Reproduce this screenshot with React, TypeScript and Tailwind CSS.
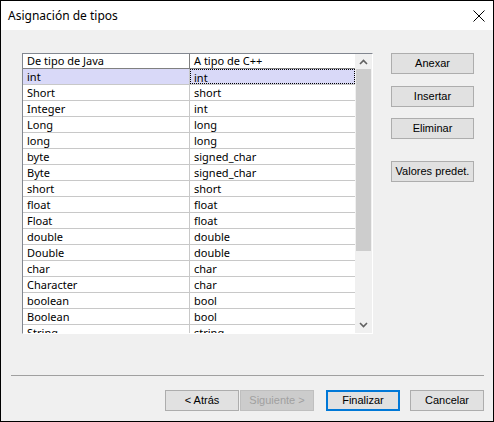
import React from 'react'

const rows: [string, string][] = [
  ['int', 'int'],
  ['Short', 'short'],
  ['Integer', 'int'],
  ['Long', 'long'],
  ['long', 'long'],
  ['byte', 'signed_char'],
  ['Byte', 'signed_char'],
  ['short', 'short'],
  ['float', 'float'],
  ['Float', 'float'],
  ['double', 'double'],
  ['Double', 'double'],
  ['char', 'char'],
  ['Character', 'char'],
  ['boolean', 'bool'],
  ['Boolean', 'bool'],
  ['String', 'string'],
]

const uiFont = { fontFamily: '"Liberation Sans", Arial, sans-serif' }
const gridFont = { fontFamily: '"Noto Sans", "Open Sans", sans-serif' }

function Button({ label, className = '', disabled = false, primary = false }: { label: string; className?: string; disabled?: boolean; primary?: boolean }) {
  return (
    <button
      disabled={disabled}
      style={uiFont}
      className={`h-[21px] w-[74px] text-[11px] leading-none flex items-center justify-center ${
        disabled
          ? 'bg-[#cccccc] border border-[#bfbfbf] text-[#a0a0a0]'
          : primary
            ? 'bg-[#e1e1e1] border-2 border-[#0078d7] text-black'
            : 'bg-[#e1e1e1] border border-[#adadad] text-black'
      } ${className}`}
    >
      {label}
    </button>
  )
}

function TypeTable() {
  return (
    <div className="w-[351px] h-[281px] border border-t-[#828790] border-l-[#828790] border-r-white border-b-white bg-[#f0f0f0] flex overflow-hidden">
      <div className="w-[333px] flex flex-col bg-white overflow-hidden" style={gridFont}>
        <div className="flex h-[15px] shrink-0 border-b border-[#808080] text-[11px] leading-[14px] text-black">
          <div className="w-[167px] pl-[4px] border-r border-[#808080]">De tipo de Java</div>
          <div className="flex-1 pl-[4px]">A tipo de C++</div>
        </div>
        {rows.map(([java, cpp], i) => (
          <div
            key={i}
            className={`flex h-[16px] shrink-0 border-b border-[#c8c8c8] text-[11px] leading-[15px] text-black ${
              i === 0 ? 'bg-[#d9d9f8]' : ''
            }`}
          >
            <div className="w-[167px] pl-[4px] border-r border-[#c8c8c8]">{java}</div>
            <div
              className={`flex-1 pl-[3px] ${i === 0 ? 'border border-dotted border-black' : 'pl-[4px]'}`}
            >
              {cpp}
            </div>
          </div>
        ))}
      </div>
      <div className="w-[17px] flex flex-col items-center bg-[#f0f0f0]">
        <div className="h-[15px] w-full flex items-center justify-center">
          <svg width="9" height="6" viewBox="0 0 9 6">
            <path d="M1 5 L4.5 1.5 L8 5" fill="none" stroke="#606060" strokeWidth="1.6" />
          </svg>
        </div>
        <div className="w-[15px] h-[182px] bg-[#cdcdcd]" />
        <div className="flex-1" />
        <div className="h-[17px] w-full flex items-center justify-center">
          <svg width="9" height="6" viewBox="0 0 9 6">
            <path d="M1 1 L4.5 4.5 L8 1" fill="none" stroke="#606060" strokeWidth="1.6" />
          </svg>
        </div>
      </div>
    </div>
  )
}

export default function App() {
  return (
    <div className="w-[494px] h-[422px] border border-black bg-[#f0f0f0] flex flex-col">
      {/* Title bar */}
      <div className="h-[29px] bg-white flex items-center justify-between shrink-0">
        <span className="pl-[7px] text-[12px] text-black" style={gridFont}>
          Asignación de tipos
        </span>
        <svg className="mr-[8px]" width="12" height="12" viewBox="0 0 12 12">
          <path d="M0.5 0.5 L11.5 11.5 M11.5 0.5 L0.5 11.5" stroke="#000" strokeWidth="1" />
        </svg>
      </div>

      {/* Body */}
      <div className="flex pt-[23px] pl-[21px]">
        <TypeTable />
        <div className="ml-[18px] flex flex-col">
          <Button label="Anexar" className="w-[83px]" />
          <Button label="Insertar" className="w-[83px] mt-[12px]" />
          <Button label="Eliminar" className="w-[83px] mt-[11px]" />
          <Button label="Valores predet." className="w-[83px] mt-[22px]" />
        </div>
      </div>

      <div className="ml-[10px] mr-[9px] mt-[41px] h-[1px] bg-[#a0a0a0]" />

      <div className="flex justify-end pr-[9px] mt-[14px]">
        <Button label="< Atrás" />
        <Button label="Siguiente >" className="ml-[1px]" disabled />
        <Button label="Finalizar" className="ml-[12px]" primary />
        <Button label="Cancelar" className="ml-[10px]" />
      </div>
    </div>
  )
}
